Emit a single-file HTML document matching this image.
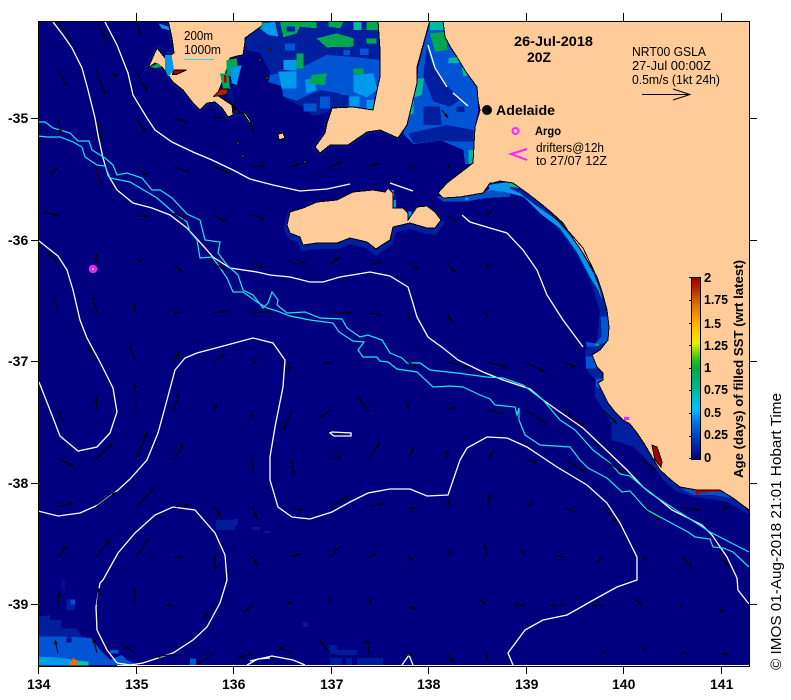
<!DOCTYPE html>
<html><head><meta charset="utf-8"><title>IMOS SST Age</title>
<style>
html,body{margin:0;padding:0;background:#fff}
svg{display:block}
text{font-family:"Liberation Sans",sans-serif;fill:#000}
.b{font-weight:bold;font-size:14px}
.t{font-size:13px}
.c{fill:none;stroke:#fff;stroke-width:1.3}
.y{fill:none;stroke:#19e6ee;stroke-width:1.2}
</style></head><body>
<svg width="791" height="700" viewBox="0 0 791 700" xmlns="http://www.w3.org/2000/svg">
<defs>
<marker id="a" markerUnits="userSpaceOnUse" markerWidth="7" markerHeight="5" refX="5" refY="2" orient="auto"><path d="M0,0L5,2L0,4L1.5,2z" fill="#000"/></marker>
<clipPath id="f"><rect x="39" y="22" width="710" height="644"/></clipPath>
<linearGradient id="g" x1="0" y1="0" x2="0" y2="1">
<stop offset="0" stop-color="#990000"/><stop offset=".06" stop-color="#b02800"/><stop offset=".125" stop-color="#d06000"/><stop offset=".25" stop-color="#ffb000"/><stop offset=".36" stop-color="#e8f000"/><stop offset=".45" stop-color="#30c020"/><stop offset=".5" stop-color="#00a840"/><stop offset=".625" stop-color="#00b8a0"/><stop offset=".72" stop-color="#00c0ff"/><stop offset=".8" stop-color="#0070e0"/><stop offset=".875" stop-color="#0040c0"/><stop offset="1" stop-color="#000078"/>
</linearGradient>
</defs>
<g clip-path="url(#f)" shape-rendering="crispEdges">
<rect x="38" y="21" width="712" height="646" fill="#000080"/>

<!-- bottom-left patches -->
<g transform="scale(.33333) translate(0,1680)">
<polygon fill="#001f9f" points="116,170 150,165 150,180 185,180 185,205 230,205 245,230 280,235 116,240"/>
<polygon fill="#0055d5" points="116,230 200,230 200,248 215,248 215,230 275,235 300,270 330,300 365,285 380,300 415,315 116,316"/>
<rect x="330" y="270" width="25" height="10" fill="#0055d5"/><rect x="570" y="295" width="18" height="20" fill="#0055d5"/>
<polygon fill="#0099ee" points="116,290 170,292 210,298 265,305 265,316 116,316"/>
<rect x="116" y="298" width="18" height="10" fill="#00b8a0"/><rect x="232" y="305" width="33" height="11" fill="#00c8a0"/>
<polygon fill="#e87000" points="208,305 217,305 217,295 225,295 225,300 232,300 232,316 208,316"/>
<rect x="200" y="118" width="25" height="32" fill="#001f9f"/><rect x="212" y="118" width="13" height="15" fill="#0055d5"/><rect x="185" y="60" width="10" height="30" fill="#001090"/>
</g>
<rect x="216" y="520" width="19" height="10" fill="#001a98"/><rect x="233" y="519" width="5" height="6" fill="#001a98"/>
<g fill="#001a98">
<rect x="330" y="658" width="12" height="7"/><rect x="346" y="658" width="6" height="7"/><rect x="357" y="658" width="26" height="7"/>
<rect x="329" y="645" width="8" height="9"/><rect x="337" y="650" width="20" height="5"/>
<rect x="303" y="622" width="5" height="5"/>
<rect x="252" y="527" width="8" height="3"/><rect x="264" y="531" width="6" height="2"/>
</g>

<!-- shelf strokes -->
<g fill="none" stroke="#000f90" stroke-width="5">
<polygon points="168,22 172,38 174,53 157,48 148,68 155,63 162,67 173,82 183,90 193,103 200,110 207,103 215,102 222,108 228,117 243,113 251,125 247,115 237,113 232,110 230,90 217,95 230,58 237,56 243,55 245,42 245,38 263,25 262,22"/>
<polygon points="379,22 380,50 380,77 377,90 373,110 353,107 332,108 327,123 325,133 315,147 320,153 330,145 348,145 367,132 380,130 398,138 407,125 417,83 417,67 430,22"/>
</g>
<polygon transform="translate(0,3)" fill="none" stroke="#001f9f" stroke-width="6" points="287,225 290,212 303,208 317,202 337,200 353,192 373,190 385,192 388,188 393,193 393,208 403,208 408,213 408,220 417,207 427,206 435,212 441,220 435,228 427,228 410,223 393,227 390,240 382,245 376,249 367,242 350,238 337,243 317,243 303,245 300,237 290,233"/>

<!-- main coast band -->
<g transform="translate(480,180) scale(.33333)">
<polygon fill="#00209f" points="0,45 40,10 100,5 180,60 250,125 310,215 350,290 385,390 395,440 385,480 345,525 360,560 380,590 365,610 395,670 440,720 475,740 525,800 555,880 610,920 650,930 720,930 790,975 810,1005 740,965 640,950 590,935 550,900 530,870 510,850 460,800 395,780 395,730 345,650 345,600 320,570 315,530 320,490 350,490 360,395 330,300 290,225 230,140 165,70 100,40 40,40 0,62"/>
<polygon fill="#0099ee" points="25,35 60,12 120,40 180,85 230,120 290,190 340,280 365,345 385,400 365,345 335,300 290,215 240,145 180,100 130,50 70,35"/>
<polygon fill="#0055d5" points="362,410 390,410 390,480 345,500 320,500 318,485 345,490 365,470"/>
<polygon fill="#0055d5" points="318,530 340,530 350,565 318,565"/>
<polygon fill="#0055d5" points="348,595 370,595 360,625 348,620"/>
<polygon fill="#0050c8" points="600,925 730,925 760,955 700,945 640,945"/>
<polygon fill="#b00000" points="648,928 720,928 722,935 655,938 655,945 648,945"/>
<polygon fill="#00b8a0" points="340,290 350,310 368,360 360,345"/>
<rect x="345" y="492" width="12" height="6" fill="#00a850"/>
<polygon fill="#0099ee" points="0,45 60,10 60,30 20,50"/>
<polygon fill="#00b8a0" points="60,10 90,6 120,25 90,20"/>
</g>
<!-- Fleurieu bays -->
<g transform="translate(270,170) scale(.33333)">
<polygon fill="#0099ee" points="655,45 720,35 720,68 700,60 660,60"/>
<polygon fill="#0050c8" points="500,80 650,65 665,60 720,70 720,80 640,85 590,95 520,95"/>
<polygon fill="#0099ee" points="585,82 595,82 595,90 585,90"/>
<polygon fill="#0099ee" points="350,60 372,60 372,80 350,80"/>
<polygon fill="#0099ee" points="352,115 360,90 378,90 378,118"/>
<polygon fill="#0099ee" points="410,125 425,125 425,150 410,150"/>
</g>

<!-- Spencer Gulf -->
<g transform="translate(140,10) scale(.33333)">
<polygon fill="#001f9f" points="365,35 718,35 720,240 700,300 640,290 575,295 555,310 520,318 490,292 435,265 425,228 385,218 390,185 360,130 320,120 315,90"/>
<polygon fill="#0055d5" points="420,190 500,165 560,135 630,140 720,150 720,240 700,300 640,290 610,285 600,250 540,240 490,262 470,272 430,260 425,228 385,215 390,195"/>
<polygon fill="#001f9f" points="500,100 640,110 700,105 720,150 630,140 560,135 500,165 480,120"/>
<polygon fill="#001f9f" points="360,35 420,35 430,85 365,75"/>
<rect x="590" y="255" width="35" height="30" fill="#001f9f"/><rect x="500" y="185" width="40" height="20" fill="#0055d5"/>
<rect x="540" y="170" width="30" height="20" fill="#0055d5"/><rect x="435" y="100" width="30" height="22" fill="#0055d5"/><rect x="610" y="120" width="20" height="15" fill="#0055d5"/><rect x="660" y="115" width="25" height="20" fill="#0055d5"/>
<polygon fill="#0099ee" points="415,185 470,185 470,235 425,235"/>
<polygon fill="#0099ee" points="495,210 520,205 530,240 500,250"/>
<polygon fill="#0099ee" points="640,195 700,190 712,240 680,262 640,245"/>
<rect x="628" y="260" width="30" height="30" fill="#0099ee"/><rect x="680" y="270" width="22" height="32" fill="#0099ee"/>
<rect x="430" y="150" width="40" height="30" fill="#0099ee"/>
<polygon fill="#0099ee" points="365,40 405,35 415,80 385,75 360,55"/>
<rect x="490" y="280" width="40" height="25" fill="#0055d5"/><rect x="540" y="260" width="30" height="35" fill="#0055d5"/>
<polygon fill="#00a850" points="420,35 530,35 530,55 480,50 470,70 430,82"/>
<rect x="440" y="50" width="25" height="15" fill="#001f9f"/>
<polygon fill="#00a850" points="530,85 590,70 640,85 640,110 560,112"/>
<polygon fill="#00a850" points="565,35 610,35 600,55 565,50"/>
<rect x="470" y="130" width="20" height="45" fill="#00a850"/>
<polygon fill="#00a850" points="515,195 560,190 555,225 505,222"/>
<rect x="640" y="175" width="30" height="18" fill="#00a850"/>
<rect x="640" y="35" width="25" height="25" fill="#00b8a0"/><rect x="680" y="85" width="30" height="15" fill="#00a850"/>
<rect x="680" y="35" width="35" height="25" fill="#00a850"/>
<!-- Gulf St Vincent -->
<polygon fill="#0055d5" points="870,35 910,35 915,80 950,140 1010,230 1015,300 1005,350 1000,462 975,462 970,420 905,392 820,402 790,372 805,310 830,230 835,170"/>
<polygon fill="#001f9f" points="860,110 880,170 925,230 960,270 930,290 880,275 850,200"/>
<polygon fill="#001f9f" points="850,290 900,290 905,345 850,345"/>
<polygon fill="#001f9f" points="920,345 1000,360 1000,395 940,395 905,392 820,400 805,370"/>
<rect x="950" y="290" width="24" height="16" fill="#001f9f"/>
<polygon fill="#00a850" points="870,70 920,65 922,120 885,125"/>
<rect x="870" y="35" width="40" height="25" fill="#00b8a0"/>
<polygon fill="#00b8a0" points="832,205 852,205 845,255 815,265"/>
<polygon fill="#00b8a0" points="810,265 822,265 820,310 800,320"/>
<polygon fill="#00b8a0" points="925,145 955,140 960,158 925,160"/>
<polygon fill="#00b8a0" points="965,170 985,195 970,200"/>
<polygon fill="#00b8a0" points="985,420 1003,420 1000,460 985,460"/>
</g>

<!-- land -->
<g fill="#ffcc99" stroke="#000" stroke-width="1">
<polygon points="443,21 445,37 451,48 457,57 466,72 477,87 478,100 480,110 475,127 474,145 473,163 460,173 447,183 438,193 443,198 460,197 483,193 490,183 493,183 500,181 513,183 527,193 540,203 552,213 563,223 572,237 583,253 590,265 597,277 603,295 607,310 609,327 608,340 600,350 592,355 597,367 603,373 603,380 598,383 604,395 608,403 615,412 623,420 630,424 637,433 645,445 652,457 660,470 671,480 680,487 697,490 720,490 733,498 749,510 752,510 752,20 443,20"/>
<polygon points="378,20 380,50 380,77 377,90 373,110 353,107 332,108 327,123 325,133 315,147 320,153 330,145 348,145 367,132 380,130 398,138 407,125 417,83 417,67 430,20"/>
<polygon points="168,20 172,38 174,53 165,58 157,48 148,68 155,63 162,67 173,82 183,90 193,103 200,110 207,103 215,102 222,108 228,117 233,115 232,105 217,95 225,75 230,58 237,56 243,55 245,42 245,38 263,25 262,20"/>
<polygon points="229,100 237,113 243,113 251,125 254,132 250,120 245,113 238,112 232,104"/>
<polygon points="287,225 290,212 303,208 317,202 337,200 353,192 373,190 385,192 388,188 393,193 393,208 403,208 408,213 408,220 417,207 427,206 435,212 441,220 435,228 427,228 410,223 393,227 390,240 382,245 376,249 367,242 350,238 337,243 317,243 303,245 300,237 290,233"/>
<polygon points="278,134 283,133 285,138 279,140"/>
<polygon points="652,445 657,447 662,462 661,467 655,460" fill="#a80000"/>
<circle cx="260" cy="60" r="1"/><circle cx="267" cy="78" r="1"/><circle cx="270" cy="50" r="1"/><circle cx="238" cy="143" r="1"/><circle cx="243" cy="156" r="1"/><circle cx="305" cy="162" r="1"/>
</g>
<polyline points="552,215 570,233 583,248 595,273" fill="none" stroke="#000" stroke-width="1"/>
<!-- head-of-bay specks -->
<g transform="translate(30,15) scale(.33333)">
<polygon fill="#a80000" stroke="#000" stroke-width="3" points="430,165 470,165 440,178 428,178"/>
<polygon fill="#0099ee" points="385,25 415,35 418,45 395,40"/>
<polygon fill="#0099ee" points="405,120 425,120 432,165 415,185 405,165"/>
<polygon fill="#00a850" points="360,155 385,145 395,155 375,160"/>
<polygon fill="#00a850" points="590,135 620,130 625,160 600,185 590,175"/>
<polygon fill="#0099ee" points="600,160 635,150 620,210 605,205"/>
<polygon fill="#00a850" points="570,175 595,175 600,222 580,225"/>
<polygon fill="#b02000" stroke="#000" stroke-width="2" points="550,245 572,222 595,222 590,238"/>
<rect x="582" y="180" width="8" height="22" fill="#a80000"/>
<polygon fill="#00a850" points="695,22 705,22 695,42"/>
</g>
<rect x="624" y="417" width="5" height="3" fill="#ff22ff"/>
</g>

<!-- contours -->
<g clip-path="url(#f)">
<polyline class="c" points="53,22 63,35 72,48 82,68 88,90 95,118 98,135 103,158 108,175 117,190 133,203 152,208 170,215 187,228 198,240 213,257 230,268 257,272 270,275 290,277 310,282 323,282 340,277 370,272 390,276 408,287 412,300 417,317 428,337 443,348 458,360 483,372 503,380 530,389 543,400 560,412 583,428 603,447 627,470 643,487 660,500 672,510 702,525 712,535 727,557 737,578 738,590 749,604"/>
<polyline class="c" points="105,22 117,45 128,73 133,95 147,118 155,130 172,142 193,152 212,160 233,170 250,179 273,185 300,191 327,189 350,184"/>
<polyline class="c" points="390,183 413,191"/>
<polyline class="c" points="428,45 435,68 447,87"/>
<polyline class="c" points="453,93 468,106"/>
<polyline class="c" points="462,215 470,222 490,228 507,233 523,250 537,270 547,295 563,320 583,347"/>
<polyline class="c" points="39,241 58,256 67,270 73,290 80,320 87,338 100,362 113,388 117,412 110,433 97,447 78,451 60,436 50,410 39,382"/>
<polyline class="c" points="38,511 58,516 80,513 98,505 118,490 130,479 147,460 158,433 167,400 175,370 185,358 197,353 227,345 253,338 273,343 285,360 283,387 275,427 270,457 270,480 278,507 292,517 310,519 332,512 350,502 368,493 390,489 410,489 427,496 448,495 460,460 467,448 487,437 507,438 527,447 557,467 587,485 607,503 620,523 637,557 637,580 617,587 597,598 567,615 543,620 525,630 508,653 513,665"/>
<polyline class="c" points="117,663 107,650 97,630 96,607 100,583 103,580 118,553 135,533 155,515 173,507 195,510 215,533 225,555 227,580 220,603 207,627 193,640 173,653 143,663 130,665 117,663"/>
<polyline class="c" points="250,661 272,656 293,660 305,665"/>
<polyline class="c" points="402,665 409,655 413,665"/>
<polyline class="c" points="247,665 258,659 270,658"/>
<polygon class="c" points="330,433 332,432 351,433 351,436 334,436"/>
<line x1="117" y1="665.5" x2="749" y2="665.5" stroke="#fff" stroke-width="1"/>
<!-- cyan -->
<polyline class="y" points="38,122 45,122 53,128 70,133 78,141 89,141 92,150 105,158 113,165 117,175 127,173 142,178 152,190 160,190 172,198 187,214 200,220 205,240 220,242 218,253 227,265 238,275 243,290 253,295 263,308 268,303 272,292 278,300 277,305 287,313 305,312 320,318 342,319 347,328 360,337 368,335 382,340 390,353 402,358 407,363 420,363 430,370 457,373 487,377 503,378 523,385 543,400 560,420 575,430 593,450 610,463 620,474 630,476 650,493 673,508 710,532 749,552"/>
<polyline class="y" points="38,136 47,137 60,137 73,142 82,147 85,157 97,165 105,166 110,178 130,182 147,192 157,198 173,212 187,222 190,232 197,240 200,258 212,257 218,265 227,278 233,292 243,292 257,302 267,308 277,311 290,316 310,320 333,323 339,332 353,341 364,342 358,350 363,357 377,357 380,361 388,362 397,369 417,372 433,387 450,386 463,387 480,395 490,399 495,405 515,407 517,415 519,408 519,420 525,435 540,445 570,447 580,460 588,468 607,478 622,492 630,491 647,510 688,532 695,537 710,539 713,547 723,548 733,552 749,567"/>
<line x1="184" y1="59.5" x2="214" y2="59.5" stroke="#19e6ee" stroke-width="1"/>
</g>

<!-- velocity vectors -->
<g clip-path="url(#f)" fill="none" stroke="#000" stroke-width="1" marker-end="url(#a)">
<path d="M58,22L72,42"/><path d="M97,22L107,41"/><path d="M136,22L141,35"/>
<path d="M58,69L66,86"/><path d="M96,69L105,95"/><path d="M113,75L118,76"/><path d="M135,69L147,92"/>
<path d="M58,118L61,134"/><path d="M97,118L102,142"/><path d="M136,118L146,133"/><path d="M174,118L188,123"/><path d="M213,117L222,118"/><path d="M442,110L448,118"/>
<path d="M59,167L50,174"/><path d="M96,167L101,185"/><path d="M136,167L148,176"/><path d="M174,167L189,172"/><path d="M213,167L230,173"/><path d="M252,167L265,165"/><path d="M292,167L300,163"/><path d="M330,167L342,162"/><path d="M368,167L379,163"/><path d="M407,167L415,167"/><path d="M448,167L450,164"/>
<path d="M43,212L59,216"/><path d="M135,216L149,217"/><path d="M174,213L187,220"/><path d="M213,215L226,222"/><path d="M252,215L265,220"/><path d="M447,216L457,222"/><path d="M486,216L492,210"/>
<path d="M58,264L47,252"/><path d="M96,264L96,253"/><path d="M136,264L142,259"/><path d="M174,264L182,272"/><path d="M213,264L225,269"/><path d="M252,264L265,267"/><path d="M292,264L306,262"/><path d="M330,265L339,257"/><path d="M369,265L382,262"/><path d="M408,264L419,269"/><path d="M447,264L456,273"/><path d="M486,264L491,268"/>
<path d="M58,313L54,297"/><path d="M97,313L92,296"/><path d="M135,313L134,303"/><path d="M174,313L179,313"/><path d="M213,313L227,311"/><path d="M252,313L271,311"/><path d="M330,313L352,313"/><path d="M369,313L382,315"/><path d="M408,313L410,320"/><path d="M447,313L451,322"/><path d="M486,313L487,317"/>
<path d="M96,362L88,347"/><path d="M136,362L129,344"/><path d="M174,362L179,352"/><path d="M213,362L225,354"/><path d="M252,362L258,362"/><path d="M290,362L289,371"/><path d="M332,362L324,364"/><path d="M408,362L418,367"/><path d="M447,362L469,368"/><path d="M486,362L507,367"/><path d="M525,362L545,372"/><path d="M564,362L575,367"/>
<path d="M58,410L64,423"/><path d="M97,410L96,397"/><path d="M136,410L135,383"/><path d="M174,411L179,393"/><path d="M213,411L217,404"/><path d="M252,410L251,419"/><path d="M292,410L284,430"/><path d="M331,410L319,418"/><path d="M369,411L358,398"/><path d="M408,412L408,402"/><path d="M447,410L456,407"/><path d="M486,410L504,413"/><path d="M525,410L545,423"/><path d="M564,410L585,427"/><path d="M603,410L617,424"/>
<path d="M58,459L73,466"/><path d="M96,459L113,443"/><path d="M136,459L147,432"/><path d="M174,460L183,444"/><path d="M252,458L252,472"/><path d="M292,459L294,475"/><path d="M331,459L342,456"/><path d="M370,459L379,443"/><path d="M409,459L413,448"/><path d="M447,459L447,450"/><path d="M487,460L493,451"/><path d="M525,459L538,463"/><path d="M564,459L585,472"/><path d="M603,459L623,473"/><path d="M642,459L655,471"/>
<path d="M58,507L73,503"/><path d="M96,507L116,492"/><path d="M136,507L154,488"/><path d="M176,507L189,504"/><path d="M214,507L221,517"/><path d="M252,507L257,519"/><path d="M292,508L303,510"/><path d="M330,508L349,496"/><path d="M369,507L384,503"/><path d="M408,508L416,509"/><path d="M447,508L450,499"/><path d="M487,508L490,493"/><path d="M526,508L533,503"/><path d="M565,508L575,512"/><path d="M603,508L618,523"/><path d="M643,508L659,520"/><path d="M682,508L701,510"/><path d="M721,508L729,508"/>
<path d="M58,557L67,546"/><path d="M96,557L110,539"/><path d="M136,557L149,538"/><path d="M174,557L183,557"/><path d="M214,556L216,571"/><path d="M252,556L257,565"/><path d="M292,557L300,553"/><path d="M330,557L339,547"/><path d="M369,557L376,554"/><path d="M408,557L414,561"/><path d="M448,556L451,550"/><path d="M487,557L485,544"/><path d="M526,557L520,549"/><path d="M565,557L556,556"/><path d="M603,557L596,563"/><path d="M643,557L647,561"/><path d="M682,557L692,567"/><path d="M720,556L728,566"/>
<path d="M58,605L59,592"/><path d="M97,605L99,588"/><path d="M135,605L135,588"/><path d="M175,605L166,605"/><path d="M213,606L204,618"/><path d="M253,605L244,612"/><path d="M292,605L287,601"/><path d="M330,606L329,597"/><path d="M369,606L371,599"/><path d="M408,606L416,609"/><path d="M487,606L480,600"/><path d="M526,605L513,605"/><path d="M565,605L550,605"/><path d="M604,606L592,605"/><path d="M643,606L636,600"/><path d="M682,606L678,609"/><path d="M721,606L722,614"/>
<path d="M58,653L55,640"/><path d="M97,653L93,638"/><path d="M135,654L125,646"/><path d="M175,654L156,657"/><path d="M213,654L197,664"/><path d="M253,654L238,658"/><path d="M292,653L278,647"/><path d="M330,653L320,641"/><path d="M369,654L367,639"/><path d="M408,654L413,655"/><path d="M448,654L453,663"/><path d="M487,653L487,660"/><path d="M603,653L607,652"/><path d="M643,653L646,646"/><path d="M682,653L686,653"/><path d="M721,653L729,655"/>
</g>

<!-- frame + ticks -->
<g stroke="#000" stroke-width="1" shape-rendering="crispEdges" fill="none">
<path d="M38.5,21.5H749.5V666.5H38.5Z"/>
<path d="M136.5,13V21M233.5,13V21M331.5,13V21M428.5,13V21M526.5,13V21M623.5,13V21M721.5,13V21"/>
<path d="M38.5,667V674M136.5,667V674M233.5,667V674M331.5,667V674M428.5,667V674M526.5,667V674M623.5,667V674M721.5,667V674"/>
<path d="M31,118.5H38M31,240.5H38M31,361.5H38M31,483.5H38M31,604.5H38"/>
<path d="M750,118.5H757M750,240.5H757M750,361.5H757M750,483.5H757M750,604.5H757"/>
</g>
<g class="b">
<text x="8" y="123" class="b">-35</text><text x="8" y="245" class="b">-36</text><text x="8" y="366" class="b">-37</text><text x="8" y="488" class="b">-38</text><text x="8" y="609" class="b">-39</text>
<text x="27" y="689" class="b">134</text><text x="125" y="689" class="b">135</text><text x="222" y="689" class="b">136</text><text x="320" y="689" class="b">137</text><text x="417" y="689" class="b">138</text><text x="515" y="689" class="b">139</text><text x="612" y="689" class="b">140</text><text x="710" y="689" class="b">141</text>
</g>

<!-- map labels -->
<text class="t" x="184" y="40" textLength="29" lengthAdjust="spacingAndGlyphs">200m</text>
<text class="t" x="184" y="54" textLength="37" lengthAdjust="spacingAndGlyphs">1000m</text>
<text class="b" x="514" y="46" textLength="79" lengthAdjust="spacingAndGlyphs">26-Jul-2018</text>
<text class="b" x="527" y="62" textLength="24" lengthAdjust="spacingAndGlyphs">20Z</text>
<text class="t" x="632" y="56" textLength="74" lengthAdjust="spacingAndGlyphs">NRT00 GSLA</text>
<text class="t" x="632" y="70" textLength="79" lengthAdjust="spacingAndGlyphs">27-Jul 00:00Z</text>
<text class="t" x="632" y="84" textLength="88" lengthAdjust="spacingAndGlyphs">0.5m/s (1kt 24h)</text>
<path d="M642,94.5H690M673,89L690,94.5L673,100" fill="none" stroke="#000" stroke-width="1"/>
<circle cx="487" cy="110" r="5" fill="#000"/>
<text class="b" x="496" y="115" textLength="59" lengthAdjust="spacingAndGlyphs">Adelaide</text>
<circle cx="515.5" cy="131" r="3" fill="#ffcc99" stroke="#ff22ff" stroke-width="2"/>
<text class="b" x="535" y="135" style="font-size:12px" textLength="26" lengthAdjust="spacingAndGlyphs">Argo</text>
<text class="t" x="536" y="152" textLength="68" lengthAdjust="spacingAndGlyphs">drifters@12h</text>
<text class="t" x="536" y="165" textLength="71" lengthAdjust="spacingAndGlyphs">to 27/07 12Z</text>
<path d="M527,149L511,154L527,160" fill="none" stroke="#ff22ff" stroke-width="2"/>
<circle cx="93" cy="269" r="3" fill="#000080" stroke="#ff22ff" stroke-width="2.4"/>
<path d="M91.5,269H94.5M93,267.5V270.5" stroke="#fff" stroke-width="1"/>

<!-- colour bar -->
<rect x="691.5" y="277.5" width="9" height="182" fill="url(#g)" stroke="#000" stroke-width="1" shape-rendering="crispEdges"/>
<path d="M689,277.5H692M689,300.5H692M689,323.5H692M689,345.5H692M689,368.5H692M689,390.5H692M689,413.5H692M689,436.5H692M689,458.5H692" stroke="#000" stroke-width="1" shape-rendering="crispEdges"/>
<g style="font-size:13px;font-weight:bold">
<text x="704" y="282" style="font-size:13px;font-weight:bold">2</text>
<text x="704" y="304" style="font-size:13px;font-weight:bold" textLength="24" lengthAdjust="spacingAndGlyphs">1.75</text>
<text x="704" y="328" style="font-size:13px;font-weight:bold" textLength="17" lengthAdjust="spacingAndGlyphs">1.5</text>
<text x="704" y="350" style="font-size:13px;font-weight:bold" textLength="24" lengthAdjust="spacingAndGlyphs">1.25</text>
<text x="704" y="372" style="font-size:13px;font-weight:bold">1</text>
<text x="704" y="394" style="font-size:13px;font-weight:bold" textLength="24" lengthAdjust="spacingAndGlyphs">0.75</text>
<text x="704" y="417" style="font-size:13px;font-weight:bold" textLength="17" lengthAdjust="spacingAndGlyphs">0.5</text>
<text x="704" y="439" style="font-size:13px;font-weight:bold" textLength="24" lengthAdjust="spacingAndGlyphs">0.25</text>
<text x="704" y="462" style="font-size:13px;font-weight:bold">0</text>
</g>
<text transform="translate(743,478) rotate(-90)" style="font-size:13px;font-weight:bold" textLength="218" lengthAdjust="spacingAndGlyphs">Age (days) of filled SST (wrt latest)</text>
<text transform="translate(781,670) rotate(-90)" style="font-size:15px" textLength="277" lengthAdjust="spacingAndGlyphs">© IMOS 01-Aug-2018 21:01 Hobart Time</text>
</svg>
</body></html>
